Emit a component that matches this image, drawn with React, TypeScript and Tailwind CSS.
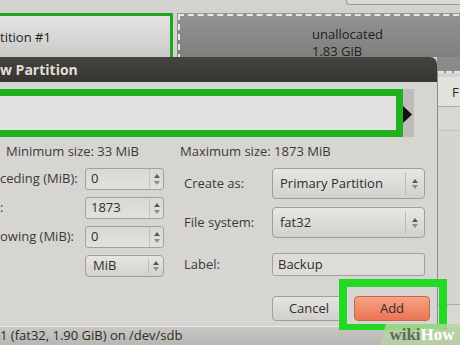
const Arrows = ({ gap = 'gap-[3px]' }: { gap?: string }) => (
  <div className={`flex flex-col items-center justify-center ${gap}`}>
    <svg width="6" height="4" viewBox="0 0 6 4"><path d="M0 4 L3 0 L6 4 Z" fill="#5a5955" /></svg>
    <svg width="6" height="4" viewBox="0 0 6 4"><path d="M0 0 L3 4 L6 0 Z" fill="#8f8d89" /></svg>
  </div>
);

const Spin = ({ value }: { value: string }) => (
  <div className="flex h-[22px] w-[79px] rounded-[3px] border border-[#a3a19d] bg-gradient-to-b from-[#d9d8d4] to-[#e2e1de]">
    <div className="flex flex-1 items-center pl-[5px] text-[13px] text-[#2e2e2e]">{value}</div>
    <div className="flex w-[14px] items-center justify-center border-l border-[#c4c2be]">
      <Arrows />
    </div>
  </div>
);

const Combo = ({ value, small }: { value: string; small?: boolean }) => (
  <div
    className={`flex rounded-[4px] border border-[#a09e9a] bg-gradient-to-b from-[#e7e6e3] to-[#d2d1cd] ${
      small ? 'h-[22px] w-[79px]' : 'h-[31px] w-[153px]'
    }`}
  >
    <div className="flex flex-1 items-center pl-[7px] text-[13px] text-[#2e2e2e]">{value}</div>
    <div className="my-[3px] w-px bg-[#bdbbb7]" />
    <div className={`flex items-center justify-center ${small ? 'w-[14px]' : 'w-[18px]'}`}>
      <Arrows gap="gap-[2px]" />
    </div>
  </div>
);

export default function App() {
  return (
    <div className="relative h-[345px] w-[460px] overflow-hidden bg-[#d4d2ce] font-['Open_Sans',sans-serif] text-[#3a3a3a]">
      {/* top strip */}
      <div className="flex h-[13px] justify-end">
        <div className="mr-[-4px] h-[5px] w-[118px] rounded-bl-[4px] border-b border-l border-[#9c9a96] bg-[#dcdad6]" />
      </div>

      {/* partition map */}
      <div className="flex h-[44px]">
        <div className="flex w-[173px] items-center border-[3px] border-b-0 border-l-0 border-[#1fa81f] bg-gradient-to-b from-[#e3e3e1] to-[#cacac8] pt-[2px] text-[13px] text-[#1f1f1f]">
          tition #1
        </div>
        <div className="ml-[4px] flex flex-1 flex-col bg-gradient-to-b from-[#939391] to-[#7f7f7d] px-[1px] pt-[1px]">
          <div className="flex flex-1 flex-col border-l-2 border-t-2 border-dashed border-[#e8e8e6] pl-[132px] pt-[10px] text-[13px] leading-[17px] text-[#1e1e1e]">
            <span>unallocated</span>
            <span>1.83 GiB</span>
          </div>
        </div>
      </div>

      {/* dialog + right panel */}
      <div className="flex h-[269px]">
        <div className="flex w-[438px] flex-col border-r border-[#8c8a86]">
          <div className="flex h-[25px] items-center rounded-tr-[7px] bg-gradient-to-b from-[#44433f] to-[#363531] text-[14px] font-bold text-[#e2ded5]">
            w Partition
          </div>
          <div className="flex flex-1 flex-col bg-[#d7d5d1]">
            <div className="mt-[7px] flex h-[48px]">
              <div className="w-[403px] border-[7px] border-l-0 border-[#1fb21f] bg-[#e3e2e0]" />
              <div className="flex w-[11px] items-center bg-[#bdbcb9] pt-[2px]">
                <svg width="9" height="17" viewBox="0 0 9 17"><path d="M0 0 L9 8.5 L0 17 Z" fill="#111" /></svg>
              </div>
            </div>

            <div className="mt-[7px] flex h-[16px] items-center text-[13px]">
              <span className="ml-[6px] w-[174px]">Minimum size: 33 MiB</span>
              <span>Maximum size: 1873 MiB</span>
            </div>

            <div className="mt-[8px] flex">
              <div className="flex w-[184px] flex-col gap-[7px] text-[13px]">
                <div className="flex items-center">
                  <span className="w-[85px]">ceding (MiB):</span>
                  <Spin value="0" />
                </div>
                <div className="flex items-center">
                  <span className="w-[85px]">:</span>
                  <Spin value="1873" />
                </div>
                <div className="flex items-center">
                  <span className="w-[85px]">owing (MiB):</span>
                  <Spin value="0" />
                </div>
                <div className="flex items-center pl-[85px]">
                  <Combo value="MiB" small />
                </div>
              </div>

              <div className="flex flex-col text-[13px]">
                <div className="flex items-center">
                  <span className="w-[88px]">Create as:</span>
                  <Combo value="Primary Partition" />
                </div>
                <div className="mt-[8px] flex items-center">
                  <span className="w-[88px]">File system:</span>
                  <Combo value="fat32" />
                </div>
                <div className="mt-[15px] flex items-center">
                  <span className="w-[88px]">Label:</span>
                  <div className="flex h-[23px] w-[153px] items-center rounded-[3px] border border-[#a3a19d] bg-[#dddcd8] pl-[5px] text-[#2e2e2e]">
                    Backup
                  </div>
                </div>
              </div>
            </div>

            <div className="mt-[19px] flex gap-[8px] pl-[272px] text-[13px] text-[#2e2e2e]">
              <div className="flex h-[25px] w-[74px] items-center justify-center rounded-[4px] border border-[#a19f9b] bg-gradient-to-b from-[#e5e4e1] to-[#d0cfcb]">
                Cancel
              </div>
              <div className="flex h-[25px] w-[76px] items-center justify-center rounded-[4px] border border-[#c6674a] bg-gradient-to-b from-[#f6a285] to-[#ec7452]">
                Add
              </div>
            </div>
          </div>
        </div>

        <div className="flex flex-1 flex-col">
          <div className="h-[16px] border-b-2 border-dashed border-[#e6e6e4] bg-[#8a8a88]" />
          <div className="mt-[4px] flex h-[30px] items-center border-b border-[#aeaca8] bg-[#e2e1dd] pl-[14px] pt-[3px] text-[13px] text-[#2a2a2a]">
            F
          </div>
          <div className="h-[24px] border-b border-[#c3c1bd] bg-[#d9d7d3]" />
          <div className="flex-1 bg-[#d6d4d0]" />
          <div className="h-[22px] border-t border-[#aeaca8] bg-[#d9d7d3]" />
        </div>
      </div>

      {/* status bar */}
      <div className="flex h-[19px] items-center border-t border-[#ecebe8] bg-gradient-to-b from-[#c9c7c3] to-[#b9b7b3] text-[13px] text-[#2c2c2c]">
        1 (fat32, 1.90 GiB) on /dev/sdb
      </div>

      {/* highlight around Add */}
      <div className="absolute left-[339px] top-[279px] h-[51px] w-[108px] border-[8px] border-b-[6px] border-[#24d924]" />

      {/* watermark */}
      <div className="absolute bottom-0 right-0 flex h-[21px] w-[80px] items-center justify-center bg-[#b7d3a2]/80 pl-[4px] font-['Liberation_Serif',serif] text-[17px] font-bold [clip-path:polygon(6px_0,100%_0,100%_100%,0_100%)]">
        <span className="text-[#5e6b55]">wiki</span>
        <span className="text-white">How</span>
      </div>
    </div>
  );
}
